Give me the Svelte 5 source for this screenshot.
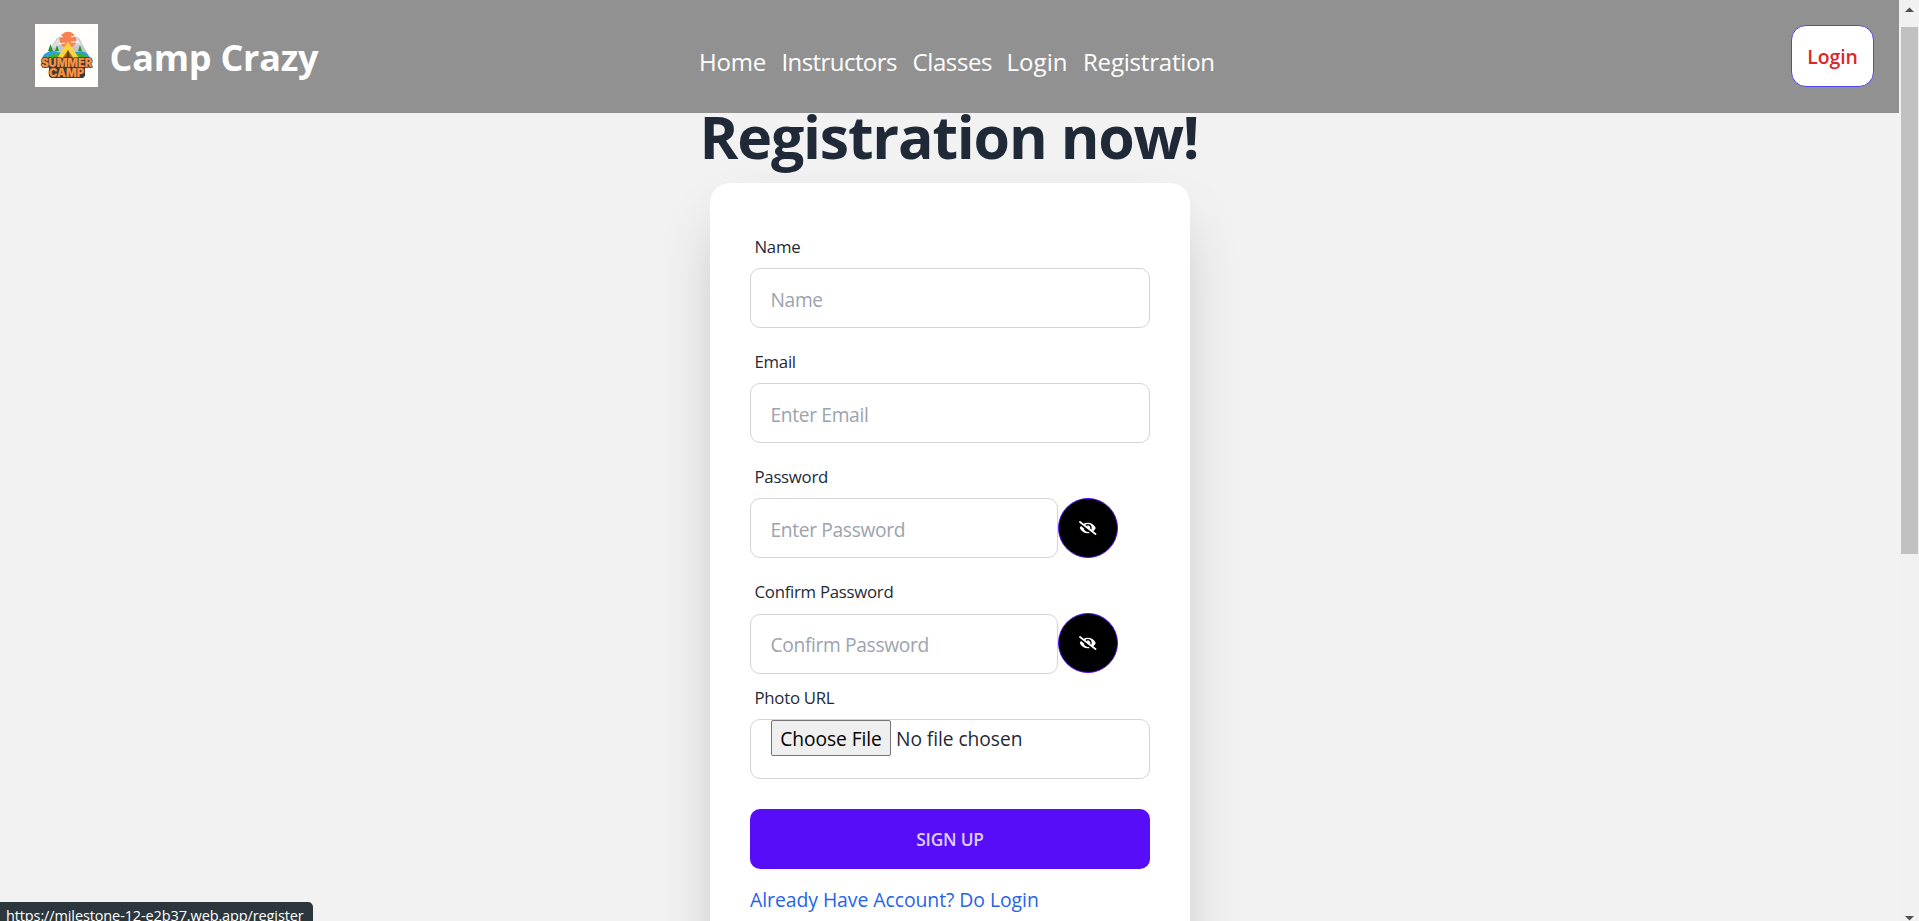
<script>
  const links = [
    { label: 'Home', width: 68.5, tracking: -0.2 },
    { label: 'Instructors', width: 117, tracking: -0.58 },
    { label: 'Classes', width: 80, tracking: -0.38 },
    { label: 'Login', width: 62.5, tracking: 0.05 },
    { label: 'Registration', width: 134, tracking: -0.2 }
  ];
  let name = $state('');
  let email = $state('');
  let password = $state('');
  let confirm = $state('');
  let showPassword = $state(false);
  let showConfirm = $state(false);
</script>

{#snippet eyeSlash()}
  <svg class="eye" viewBox="0 0 640 512" fill="currentColor" aria-hidden="true">
    <path d="M320 400c-75.85 0-137.25-58.71-142.9-133.11L72.2 185.82c-13.79 17.3-26.48 35.59-36.72 55.59a32.35 32.35 0 0 0 0 29.19C89.71 376.41 197.07 448 320 448c26.91 0 52.87-4 77.89-10.46L346 397.39a144.13 144.13 0 0 1-26 2.61zm313.82 58.1l-110.55-85.44a331.25 331.25 0 0 0 81.25-102.07 32.35 32.35 0 0 0 0-29.19C550.29 135.59 442.93 64 320 64a308.15 308.15 0 0 0-147.32 37.7L45.46 3.37A16 16 0 0 0 23 6.18L3.37 31.45A16 16 0 0 0 6.18 53.9l588.36 454.73a16 16 0 0 0 22.46-2.81l19.64-25.27a16 16 0 0 0-2.82-22.45zm-183.72-142l-39.3-30.38A94.75 94.75 0 0 0 416 256a94.76 94.76 0 0 0-121.31-92.21A47.65 47.65 0 0 1 304 192a46.64 46.64 0 0 1-1.54 10l-73.61-56.89A142.31 142.31 0 0 1 320 112a143.92 143.92 0 0 1 144 144c0 21.63-5.29 41.79-13.9 60.11z" />
  </svg>
{/snippet}

<div class="window">
  <div class="page">
    <header>
      <div class="brand">
        <svg class="logo" viewBox="0 0 63 63" aria-hidden="true">
          <rect width="63" height="63" fill="#fffefa" />
          <path d="M12 30 22 14l3-1 8 8 8-8 3 1 9 16z" fill="#c6c7c9" />
          <path d="m17 24 6-10 3 5-4 4zM42 13l6 10-5-3-2 3z" fill="#dedfe0" />
          <circle cx="33" cy="16" r="8.200" fill="#fb8150" />
          <path d="M22 12l6 1M36 13l7-2M24 20l6-1M36 18h8" stroke="#fffefa" stroke-width="1" />
          <path d="M7 34c2-5 6-7 12-7l8 2 14-1c7-2 12 1 14 6z" fill="#2f9ee8" />
          <path d="M8 35c4-4 9-5 16-5l16 0c7-1 11 0 14 5z" fill="#3fae35" />
          <path d="m15.500 20-2.500 7h2l-.5 1h2l-.5-1h2zM22 21l-2 6h4zM45 21l-2 6h4z" fill="#269431" />
          <path d="M33 17.500 21.500 35h23z" fill="#ffd33c" />
          <path d="M33 26l-6 9h12z" fill="#9a6514" />
          <path d="m33 26-2 9h4z" fill="#5a3b1a" />
          <path d="M7 34.500h49v9h-6v8.500l-2 2H16l-2-2v-8.500H7z" fill="#3a3b3f" />
          <text x="31.700" y="43" textLength="51" lengthAdjust="spacingAndGlyphs">SUMMER</text>
          <text x="31.500" y="53.200" textLength="35" lengthAdjust="spacingAndGlyphs">CAMP</text>
        </svg>
        <span class="title">Camp Crazy</span>
      </div>
      <nav>
        {#each links as link}
          <a href="#top" style:width="{link.width}px" style:letter-spacing="{link.tracking}px">{link.label}</a>
        {/each}
      </nav>
      <button class="login" type="button">Login</button>
    </header>

    <main>
      <h1>Registration now!</h1>
      <form onsubmit={(e) => e.preventDefault()}>
        <div class="field">
          <label for="name">Name</label>
          <input id="name" type="text" placeholder="Name" bind:value={name} />
        </div>
        <div class="field">
          <label for="email">Email</label>
          <input id="email" type="email" placeholder="Enter Email" bind:value={email} />
        </div>
        <div class="field">
          <label for="password">Password</label>
          <div class="secret">
            <input id="password" type={showPassword ? 'text' : 'password'} placeholder="Enter Password" bind:value={password} />
            <button class="toggle" type="button" aria-label="Toggle password" onclick={() => (showPassword = !showPassword)}>{@render eyeSlash()}</button>
          </div>
        </div>
        <div class="field confirm">
          <label for="confirm">Confirm Password</label>
          <div class="secret">
            <input id="confirm" type={showConfirm ? 'text' : 'password'} placeholder="Confirm Password" bind:value={confirm} />
            <button class="toggle" type="button" aria-label="Toggle confirmation" onclick={() => (showConfirm = !showConfirm)}>{@render eyeSlash()}</button>
          </div>
        </div>
        <div class="field photo">
          <label for="photo">Photo URL</label>
          <input id="photo" type="file" />
        </div>
        <button class="submit" type="submit">SIGN UP</button>
        <a class="account" href="#top">Already Have Account? Do Login</a>
      </form>
    </main>
  </div>

  <div class="scrollbar">
    <svg width="19" height="27" viewBox="0 0 19 27"><path d="M5 12 9.500 7.500 14 12z" fill="#505050" /></svg>
    <div class="thumb"></div>
    <svg class="down" width="19" height="27" viewBox="0 0 19 27"><path d="M5 22h9l-4.500 4.500z" fill="#505050" /></svg>
  </div>

  <div class="status">https://milestone-12-e2b37.web.app/register</div>
</div>

<style>
  :global(body) { margin: 0; overflow: hidden; }
  .window {
    position: relative;
    display: flex;
    height: 921px;
    overflow: hidden;
    background: #f2f2f2;
    color: #1f2937;
    font-family: "Open Sans", "Noto Sans", sans-serif;
  }
  .window * { box-sizing: border-box; }
  button, input { font-family: inherit; }
  .page { flex: 1; min-width: 0; }
  header {
    height: 113px;
    padding: 0 25px 0 35px;
    background: #919191;
    display: grid;
    grid-template-columns: 664px 1fr auto;
    align-items: start;
  }
  .brand { display: flex; padding-top: 24px; gap: 11.5px; }
  .logo { width: 63px; height: 63px; flex: none; }
  .logo text {
    font: 900 11.2px Inter, "Liberation Sans", sans-serif;
    text-anchor: middle;
    fill: #fb913c;
    stroke: #3a3b3f;
    stroke-width: 1.4px;
    stroke-linejoin: round;
    paint-order: stroke;
  }
  .title {
    color: #fff;
    font-size: 36px;
    font-weight: 700;
    line-height: 48px;
    margin-top: 10px;
    letter-spacing: -0.25px;
    white-space: nowrap;
  }
  nav { display: flex; padding-top: 44px; gap: 14px; }
  nav a {
    flex: none;
    color: #fff;
    text-decoration: none;
    font-size: 24px;
    line-height: 36px;
    white-space: nowrap;
  }
  .login {
    width: 83px;
    height: 62px;
    margin-top: 25px;
    padding: 1px 0 0;
    border: 1px solid #4f46e5;
    border-radius: 15px;
    background: #fff;
    color: #dc2626;
    font-size: 19.4px;
    font-weight: 600;
    letter-spacing: -0.1px;
  }
  main { display: flex; flex-direction: column; align-items: center; padding-left: 1px; }
  h1 {
    margin: -7px 0 0;
    height: 77px;
    padding-right: 2px;
    font-size: 59px;
    line-height: 60px;
    font-weight: 700;
    letter-spacing: -1.2px;
    white-space: nowrap;
  }
  form {
    width: 480px;
    height: 820px;
    flex: none;
    padding: 40px;
    border-radius: 20px;
    background: #fff;
    box-shadow: 0 31px 62px -15px rgba(0, 0, 0, 0.25);
    display: flex;
    flex-direction: column;
  }
  .field { height: 115px; display: flex; flex-direction: column; flex: none; }
  label {
    height: 45px;
    padding: 12px 4.5px 0;
    font-size: 16.8px;
    line-height: 24px;
    letter-spacing: -0.27px;
    flex: none;
  }
  input {
    width: 100%;
    height: 60px;
    padding: 2px 20px 0 19.5px;
    border: 1px solid #d2d4d7;
    border-radius: 10px;
    background: #fff;
    color: #1f2937;
    font-size: 19.2px;
    letter-spacing: -0.34px;
  }
  input::placeholder { color: #9ca3af; opacity: 1; }
  .secret { display: flex; }
  .secret input { width: 308px; }
  .confirm { height: 106px; }
  .confirm input { margin-top: 1px; padding-top: 0; }
  .toggle {
    width: 60px;
    height: 60px;
    padding: 0;
    border: 1px solid #570df8;
    border-radius: 50%;
    background: #000;
    color: #fff;
    display: flex;
    align-items: center;
    justify-content: center;
  }
  .eye { width: 17.5px; height: 14px; }
  .photo { height: 135px; }
  #photo { padding: 0 20px; line-height: 34px; letter-spacing: -0.05px; }
  #photo::file-selector-button {
    width: 120px;
    height: 36px;
    margin: 0 5px 0 0;
    padding: 1px 0 0;
    border: 1px solid #767676;
    border-radius: 2px;
    background: #efefef;
    color: #000;
    font: inherit;
    letter-spacing: inherit;
  }
  .submit {
    width: 400px;
    height: 60px;
    flex: none;
    border: 0;
    border-radius: 10px;
    background: #570df8;
    color: #ddcffe;
    font-size: 17.3px;
    font-weight: 600;
    letter-spacing: -0.2px;
    padding: 0;
  }
  .account {
    margin-top: 17px;
    color: #2563eb;
    text-decoration: none;
    font-size: 19.4px;
    line-height: 28px;
    letter-spacing: -0.06px;
    white-space: nowrap;
  }
  .scrollbar {
    width: 20px;
    height: 921px;
    padding-left: 1px;
    background: #f1f1f1;
    display: flex;
    flex-direction: column;
    align-items: center;
  }
  .scrollbar svg { flex: none; }
  .thumb { width: 17px; height: 527px; background: #c1c1c1; }
  .scrollbar .down { margin-top: auto; }
  .status {
    position: absolute;
    left: 0;
    top: 902px;
    width: 313px;
    height: 30px;
    padding-left: 6px;
    border-radius: 0 5px 0 0;
    background: #2b363d;
    color: #fff;
    font-size: 14.5px;
    line-height: 28px;
    letter-spacing: -0.12px;
    white-space: nowrap;
  }
</style>
